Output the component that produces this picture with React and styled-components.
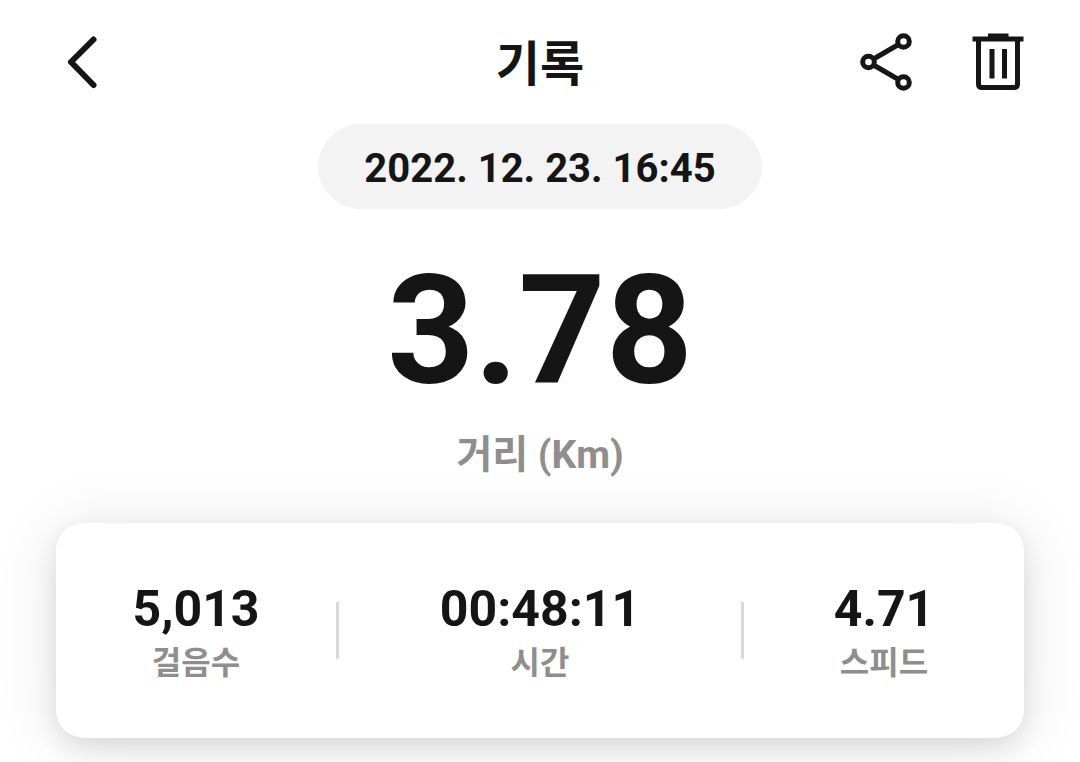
import React from 'react';
import styled, { createGlobalStyle } from 'styled-components';

const GlobalStyle = createGlobalStyle`
  * {
    box-sizing: border-box;
  }

  body {
    margin: 0;
    background: #fff;
    color: #151515;
    font-family: Roboto, 'Noto Sans CJK KR', sans-serif;
    font-weight: 700;
  }
`

const Page = styled.div`
  padding: 24px 56px;
`

const Header = styled.header`
  display: grid;
  grid-template-columns: 1fr auto 1fr;
  align-items: center;
  height: 76px;
`

const Title = styled.h1`
  margin: 0;
  padding-top: 6px;
  font-size: 48px;
  line-height: 70px;
`

const Actions = styled.div`
  display: flex;
  justify-content: flex-end;
  gap: 60px;
`

const IconButton = styled.button`
  display: flex;
  justify-self: start;
  padding: 0;
  border: 0;
  background: none;
  color: inherit;
  cursor: pointer;
`

const Summary = styled.main`
  display: flex;
  flex-direction: column;
  align-items: center;
  margin-top: 24px;
`

const DateBadge = styled.time`
  padding: 4px 46px 0;
  border-radius: 43px;
  background: #f3f3f3;
  font-size: 40px;
  line-height: 81px;
`

const Distance = styled.div`
  margin-top: 33px;
  font-size: 152px;
  line-height: 178px;
`

const DistanceLabel = styled.div`
  margin-top: 5px;
  color: #8e8e8e;
  font-size: 39px;
  line-height: 60px;
`

const Card = styled.section`
  display: grid;
  grid-template-columns: 280fr 3px 402fr 3px 280fr;
  align-items: center;
  margin-top: 38px;
  padding: 53px 0;
  border-radius: 28px;
  background: #fff;
  box-shadow: 0 10px 24px rgba(0, 0, 0, 0.09), 0 4px 64px rgba(0, 0, 0, 0.11);
`

const Stat = styled.div`
  text-align: center;
`

const Value = styled.div`
  font-size: 50px;
  line-height: 66px;
`

const Label = styled.div`
  color: #8e8e8e;
  font-size: 32px;
  line-height: 43px;
`

const Divider = styled.div`
  height: 57px;
  background: #d9d9d9;
`

const BackIcon = () => (
  <svg width="52" height="60" viewBox="0 0 52 60" fill="none" stroke="currentColor" strokeWidth="6" strokeLinecap="round" strokeLinejoin="round">
    <path d="M37.500 7.500L15 30L37.500 53" />
  </svg>
)

const ShareIcon = () => (
  <svg width="60" height="60" viewBox="0 0 60 60" fill="none" stroke="currentColor" strokeWidth="5">
    <circle cx="16.500" cy="30" r="5.800" />
    <circle cx="51.500" cy="9.500" r="5.800" />
    <circle cx="51.500" cy="50.500" r="5.800" />
    <path d="M21.500 27L46.500 12.500M21.500 33L46.500 47.500" />
  </svg>
)

const TrashIcon = () => (
  <svg width="52" height="60" viewBox="0 0 52 60" fill="none" stroke="currentColor" strokeWidth="5">
    <path d="M0.500 7H51.500M16 4H36.500" />
    <path d="M6.500 8V52Q6.500 55.500 10 55.500H42Q45.500 55.500 45.500 52V8" />
    <path d="M20 17V46.500M32.500 17V46.500" />
  </svg>
)

const stats = [
  { label: '걸음수', value: '5,013' },
  { label: '시간', value: '00:48:11' },
  { label: '스피드', value: '4.71' },
]

const App = () => (
  <React.Fragment>
    <GlobalStyle />
    <Page>
      <Header>
        <IconButton type="button" aria-label="뒤로">
          <BackIcon />
        </IconButton>
        <Title>기록</Title>
        <Actions>
          <IconButton type="button" aria-label="공유">
            <ShareIcon />
          </IconButton>
          <IconButton type="button" aria-label="삭제">
            <TrashIcon />
          </IconButton>
        </Actions>
      </Header>
      <Summary>
        <DateBadge dateTime="2022-12-23T16:45">2022. 12. 23. 16:45</DateBadge>
        <Distance>3.78</Distance>
        <DistanceLabel>거리 (Km)</DistanceLabel>
      </Summary>
      <Card>
        {stats.map(({ label, value }, index) => (
          <React.Fragment key={label}>
            {index > 0 && <Divider />}
            <Stat>
              <Value>{value}</Value>
              <Label>{label}</Label>
            </Stat>
          </React.Fragment>
        ))}
      </Card>
    </Page>
  </React.Fragment>
)

export default App;
